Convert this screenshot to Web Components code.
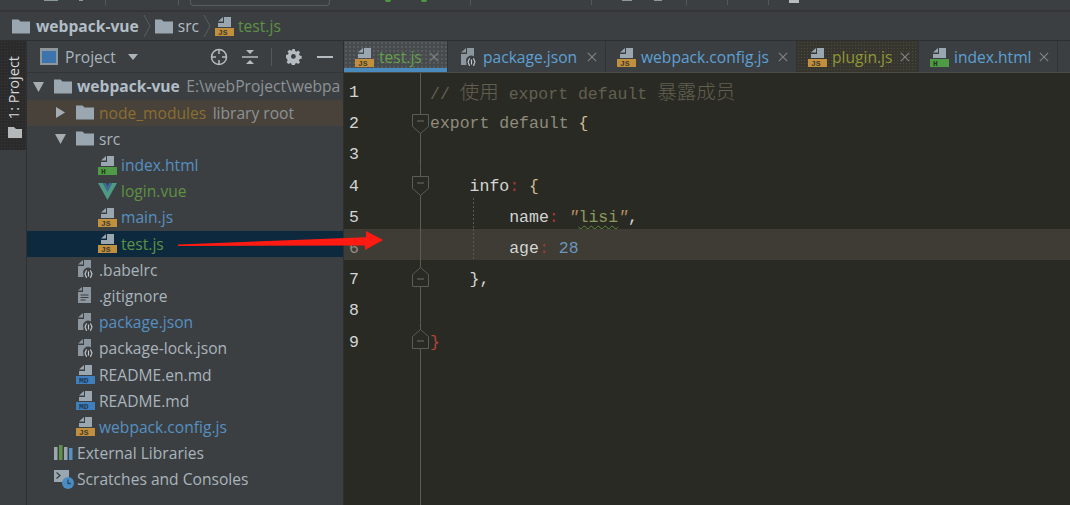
<!DOCTYPE html>
<html lang="en">
<head>
<meta charset="UTF-8">
<title>webpack-vue</title>
<style>
  html, body { margin: 0; height: 100%; background: #3c3f41; overflow: hidden; }
  body { font-family: "Open Sans", "Noto Sans", sans-serif; }
</style>
</head>
<body>

<ide-app>
  <ide-toolbar slot="toolbar"></ide-toolbar>

  <ide-breadcrumb slot="breadcrumb">
    <crumb-item icon="folder" bold>webpack-vue</crumb-item>
    <crumb-item icon="folder">src</crumb-item>
    <crumb-item icon="js" color="#5d9144" last>test.js</crumb-item>
  </ide-breadcrumb>

  <tool-strip slot="strip">1: Project</tool-strip>

  <project-panel slot="panel">
    <tree-row level="0" arrow="open" icon="folder" bold>webpack-vue<span slot="hint">E:\webProject\webpa</span></tree-row>
    <tree-row level="1" arrow="closed" icon="folder" color="#8a6f30" tint="#48423b">node_modules<span slot="hint">library root</span></tree-row>
    <tree-row level="1" arrow="open" icon="folder">src</tree-row>
    <tree-row level="2" icon="html" color="#5590c2">index.html</tree-row>
    <tree-row level="2" icon="vue" color="#5d9144">login.vue</tree-row>
    <tree-row level="2" icon="js" color="#5590c2">main.js</tree-row>
    <tree-row level="2" icon="js" color="#5d9144" tint="#0d293e">test.js</tree-row>
    <tree-row level="1" icon="json">.babelrc</tree-row>
    <tree-row level="1" icon="text">.gitignore</tree-row>
    <tree-row level="1" icon="json" color="#5590c2">package.json</tree-row>
    <tree-row level="1" icon="json">package-lock.json</tree-row>
    <tree-row level="1" icon="md">README.en.md</tree-row>
    <tree-row level="1" icon="md">README.md</tree-row>
    <tree-row level="1" icon="js" color="#5590c2">webpack.config.js</tree-row>
    <tree-row level="0" icon="libs">External Libraries</tree-row>
    <tree-row level="0" icon="scratch">Scratches and Consoles</tree-row>
  </project-panel>

  <editor-tabs slot="tabs">
    <editor-tab width="104" icon="js" color="#66a04a" state="active">test.js</editor-tab>
    <editor-tab width="158" icon="json" color="#5da0d6">package.json</editor-tab>
    <editor-tab width="191" icon="js" color="#5da0d6">webpack.config.js</editor-tab>
    <editor-tab width="122" icon="js" color="#8f9633" state="tinted">plugin.js</editor-tab>
    <editor-tab width="139" icon="html" color="#5da0d6">index.html</editor-tab>
  </editor-tabs>

  <code-editor slot="editor">
    <code-line n="1"><code-tok kind="cm">// <code-tok kind="cjk">使用</code-tok> export default <code-tok kind="cjk">暴露成员</code-tok></code-tok></code-line>
    <code-line n="2" fold="down"><code-tok kind="kw">export default </code-tok><code-tok kind="br">{</code-tok></code-line>
    <code-line n="3"></code-line>
    <code-line n="4" fold="down">    <code-tok kind="id">info</code-tok><code-tok kind="col">: </code-tok><code-tok kind="br">{</code-tok></code-line>
    <code-line n="5" guide>        <code-tok kind="id">name</code-tok><code-tok kind="col">: </code-tok><code-tok kind="qt">"</code-tok><code-tok kind="str">lisi</code-tok><code-tok kind="qt">"</code-tok><code-tok kind="id">,</code-tok></code-line>
    <code-line n="6" guide current>        <code-tok kind="id">age</code-tok><code-tok kind="col">: </code-tok><code-tok kind="num">28</code-tok></code-line>
    <code-line n="7" fold="up">    <code-tok kind="id">}</code-tok><code-tok kind="id">,</code-tok></code-line>
    <code-line n="8"></code-line>
    <code-line n="9" fold="up"><code-tok kind="end">}</code-tok></code-line>
    <code-line rest></code-line>
  </code-editor>

  <red-arrow slot="overlay"></red-arrow>
</ide-app>

<script>
  // all the little icons, keyed by name. page + badge is shared by the file types
  const PAGE = '<path d="M9 0h7v10H3V6h6z" fill="#9aa7b0"/><path d="M3 4.600 8 0v4.600z" fill="#9aa7b0"/>';
  const badge = (bg, label, fg) =>
    `<rect x="0" y="11" width="19" height="8" fill="${bg}"/>` +
    `<text x="3" y="18" font-family="Liberation Mono, monospace" font-size="8" font-weight="700" fill="${fg}">${label}</text>`;

  const ICONS = {
    folder: '<path d="M0 2.500h6.500l2 2H18v12H0z" fill="#9aa7b0"/>',
    js: PAGE + badge('#c28f3c', 'JS', '#3c3a2c'),
    html: PAGE + badge('#4f9a45', 'H', '#23381f'),
    md: PAGE + badge('#3f7fbd', 'MD', '#1f3a55'),
    vue: '<path d="M0 1h5l4.500 8L14 1h5L9.500 18z" fill="#4e9a83"/><path d="M5 1h3l1.500 3L11 1h3L9.500 10z" fill="#3d6a94"/>',
    json: '<path d="M8 0h7v8.500a5 5 0 0 0-7.500 6V17H2V6h6z" fill="#8b969e"/><path d="M2 4.600 7 0v4.600z" fill="#8b969e"/>' +
      '<circle cx="12.500" cy="14" r="5" fill="#3c3f41"/>' +
      '<path d="M11 10.500c-1.500 0-1 3.500-2.500 3.500 1.500 0 1 3.500 2.500 3.500M14 10.500c1.500 0 1 3.500 2.500 3.500-1.500 0-1 3.500-2.500 3.500M12.500 11.500v5" fill="none" stroke="#c0c8cd" stroke-width="1.200"/>',
    text: '<path d="M7 1h8v16H2V6h5z" fill="#8b969e"/><path d="M2 4.600 6 1v3.600z" fill="#8b969e"/><path d="M4.500 9h8M4.500 11.500h8M4.500 14h5" stroke="#3c3f41" stroke-width="1.200"/>',
    libs: '<rect x="0" y="3" width="3.500" height="13" fill="#9aa7b0"/><rect x="5" y="1" width="3.500" height="15" fill="#5d9144"/><rect x="10" y="3" width="3.500" height="13" fill="#9aa7b0"/><rect x="15" y="4" width="3.500" height="12" fill="#5590c2"/>',
    scratch: '<rect x="0" y="0" width="15" height="12" fill="#9aa7b0"/><path d="M2.500 2.500 6 5.500 2.500 8.500" fill="none" stroke="#3c3f41" stroke-width="1.300"/><circle cx="14" cy="13" r="6" fill="#4a8cc4"/><path d="M14 9.500V13.500H17" fill="none" stroke="#2b4a66" stroke-width="1.300"/>'
  };

  class FileIcon extends HTMLElement {
    connectedCallback() {
      const name = this.getAttribute('name');
      this.attachShadow({ mode: 'open' }).innerHTML = `
        <style>
          :host { display: inline-flex; width: 19px; height: 19px; flex: none; }
          svg { width: 19px; height: 19px; display: block; overflow: visible; }
        </style>
        <svg viewBox="0 0 19 19">${ICONS[name] || ''}</svg>`;
    }
  }

  class IdeApp extends HTMLElement {
    constructor() {
      super();
      this.attachShadow({ mode: 'open' }).innerHTML = `
        <style>
          :host { display: grid; position: relative; width: 1070px; height: 505px; overflow: hidden;
            grid-template-columns: 27px 317px 1fr; grid-template-rows: 12px 29px 32px 1fr; background: #3c3f41; }
          ::slotted([slot=toolbar]), ::slotted([slot=breadcrumb]) { grid-column: 1 / -1; }
          ::slotted([slot=strip]) { grid-column: 1; grid-row: 3 / 5; }
          ::slotted([slot=panel]) { grid-column: 2; grid-row: 3 / 5; }
          ::slotted([slot=tabs]) { grid-column: 3; grid-row: 3; }
          ::slotted([slot=editor]) { grid-column: 3; grid-row: 4; }
        </style>
        <slot name="toolbar"></slot>
        <slot name="breadcrumb"></slot>
        <slot name="strip"></slot>
        <slot name="panel"></slot>
        <slot name="tabs"></slot>
        <slot name="editor"></slot>
        <slot name="overlay"></slot>`;
    }
  }

  // only the bottom edge of the main toolbar is in the crop
  class IdeToolbar extends HTMLElement {
    constructor() {
      super();
      this.attachShadow({ mode: 'open' }).innerHTML = `
        <style>
          :host { display: flex; height: 12px; box-sizing: border-box; background: #3c3f41; border-bottom: 2px solid #333537; align-items: flex-start; }
          i { display: block; flex: none; }
          .sep { width: 1px; height: 5px; background: #55585a; }
          .search { width: 140px; height: 6px; box-sizing: border-box; border: 1px solid #5a5d5f; border-top: 0; border-radius: 0 0 4px 4px; }
          .dot { width: 6px; height: 2px; border-radius: 0 0 3px 3px; background: #4f9a45; }
          .nub { height: 1px; background: #8a9a9a; }
          .white { width: 10px; height: 3px; background: #b9bcbd; }
        </style>
        <i class="nub" style="width:14px;margin-left:44px"></i>
        <i class="nub" style="width:4px;margin-left:21px"></i>
        <i class="sep" style="margin-left:22px"></i>
        <i class="sep" style="margin-left:72px"></i>
        <i class="search" style="margin-left:11px"></i>
        <i class="dot" style="margin-left:55px"></i>
        <i class="dot" style="margin-left:30px"></i>
        <i class="sep" style="margin-left:43px"></i>
        <i class="sep" style="margin-left:120px"></i>
        <i class="nub" style="width:10px;margin-left:30px"></i>
        <i class="nub" style="width:8px;margin-left:22px"></i>
        <i class="sep" style="margin-left:24px"></i>
        <i class="sep" style="margin-left:40px"></i>
        <i class="sep" style="margin-left:40px"></i>
        <i class="white" style="margin-left:20px"></i>`;
    }
  }

  class IdeBreadcrumb extends HTMLElement {
    constructor() {
      super();
      this.attachShadow({ mode: 'open' }).innerHTML = `
        <style>
          :host { display: flex; align-items: center; box-sizing: border-box; height: 29px; padding-left: 12px; background: #3c3f41; border-bottom: 1px solid #2d2f30; }
        </style>
        <slot></slot>`;
    }
  }

  class CrumbItem extends HTMLElement {
    connectedCallback() {
      const bold = this.hasAttribute('bold');
      const last = this.hasAttribute('last');
      this.attachShadow({ mode: 'open' }).innerHTML = `
        <style>
          :host { display: inline-flex; align-items: center; font-size: 15.6px; color: ${this.getAttribute('color') || '#b1bdc7'}; }
          .t { margin-left: ${bold ? 5 : 4}px; font-weight: ${bold ? 700 : 400}; }
          svg { width: 8px; height: 24px; margin: 0 4px; }
        </style>
        <file-icon name="${this.getAttribute('icon')}"></file-icon>
        <span class="t"><slot></slot></span>
        ${last ? '' : '<svg viewBox="0 0 8 24"><path d="M1 1 7 12 1 23" fill="none" stroke="#5b5e60"/></svg>'}`;
    }
  }

  class ToolStrip extends HTMLElement {
    constructor() {
      super();
      this.attachShadow({ mode: 'open' }).innerHTML = `
        <style>
          :host { display: block; background: #3c3f41; border-right: 1px solid #2d2f30; box-sizing: border-box; }
          .btn { background: radial-gradient(#363636 30%, transparent 35%) 0 0/3px 3px, #2b2b2b; height: 109px; display: flex; flex-direction: column; align-items: center; padding: 15px 0 0 3px; box-sizing: border-box; }
          .label { writing-mode: vertical-rl; transform: rotate(180deg); font-size: 14.500px; color: #d6d8d9; line-height: 1; }
          svg { width: 14px; height: 12px; margin-top: 7px; }
        </style>
        <div class="btn">
          <span class="label"><slot></slot></span>
          <svg viewBox="0 0 14 12"><path d="M0 1h6l2 2h6v9H0z" fill="#b5b8b9"/></svg>
        </div>`;
    }
  }

  class ProjectPanel extends HTMLElement {
    constructor() {
      super();
      this.attachShadow({ mode: 'open' }).innerHTML = `
        <style>
          :host { display: flex; flex-direction: column; background: #3c3f41; border-right: 1px solid #2d2f30; box-sizing: border-box; overflow: hidden; min-width: 0; }
          .head { display: flex; align-items: center; height: 32.4px; flex: none; box-sizing: border-box; border-bottom: 1px solid #323436; padding-left: 13px; color: #a9b4bc; font-size: 15.6px; }
          .head svg { display: block; flex: none; }
          .name { margin-left: 7px; }
          .tools { display: flex; align-items: center; margin-left: auto; }
          .sep { width: 1px; height: 18px; background: #55585a; }
        </style>
        <div class="head">
          <svg width="18" height="17" viewBox="0 0 18 17"><rect width="18" height="17" fill="#8d979e"/><rect x="2" y="3" width="14" height="12" fill="#3d74ad"/></svg>
          <span class="name">Project</span>
          <svg style="margin-left:12px" width="10" height="6" viewBox="0 0 10 6"><path d="M0 0h10L5 6z" fill="#a9b4bc"/></svg>
          <div class="tools">
            <svg width="18" height="18" viewBox="0 0 18 18"><g fill="none" stroke="#b5bcc1" stroke-width="1.500"><circle cx="9" cy="9" r="7.500"/><path d="M9 1v5M9 12v5M1 9h5M12 9h5"/></g></svg>
            <svg style="margin-left:14px" width="16" height="14" viewBox="0 0 16 14"><path d="M0 7h16" stroke="#b5bcc1" stroke-width="1.500"/><path d="M4 0h8L8 4zM4 14h8l-4-4z" fill="#b5bcc1"/></svg>
            <i class="sep" style="margin-left:13px"></i>
            <svg style="margin-left:14px" width="16" height="16" viewBox="0 0 16 16"><path d="M6.500 0h3l.4 2.200 1.500.7 1.900-1.200 2 2.100-1.200 1.800.7 1.600 2.200.4v3l-2.200.4-.7 1.500 1.200 1.900-2.100 2-1.800-1.200-1.600.7-.4 2.200h-3l-.4-2.200-1.500-.7-1.900 1.200-2-2.100 1.200-1.800-.7-1.600L0 9.500v-3l2.200-.4.700-1.500L1.700 2.700l2.100-2 1.800 1.200 1.600-.7z" fill="#b5bcc1" transform="scale(.92)"/><circle cx="7.400" cy="7.400" r="2.400" fill="#3c3f41"/></svg>
            <svg style="margin-left:15px;margin-right:10px" width="16" height="2" viewBox="0 0 16 2"><rect width="16" height="2" fill="#b5bcc1"/></svg>
          </div>
        </div>
        <slot></slot>`;
    }
  }

  class TreeRow extends HTMLElement {
    connectedCallback() {
      const level = Number(this.getAttribute('level') || 0);
      const arrow = this.getAttribute('arrow');
      const bold = this.hasAttribute('bold');
      const tri = arrow === 'open' ? '<path d="M0 1h11L5.500 11z" fill="#a6adb2"/>'
        : arrow === 'closed' ? '<path d="M1 0 10 5.500 1 11z" fill="#a6adb2"/>' : '';
      this.attachShadow({ mode: 'open' }).innerHTML = `
        <style>
          :host { display: flex; align-items: center; height: 26.2px; flex: none; white-space: nowrap; overflow: hidden;
            box-sizing: border-box; padding-left: ${6 + level * 22}px; font-size: 15.6px;
            background: ${this.getAttribute('tint') || 'transparent'}; color: ${this.getAttribute('color') || '#a9b4bc'}; }
          svg { width: 21px; height: 11px; flex: none; display: block; }
          .t { margin-left: 4px; font-weight: ${bold ? 700 : 400}; color: ${bold ? '#b1bdc7' : 'inherit'}; }
          .hint { margin-left: 6.500px; color: #8d9396; font-weight: 400; }
        </style>
        <svg viewBox="0 0 21 11">${tri}</svg>
        <file-icon name="${this.getAttribute('icon')}"></file-icon>
        <span class="t"><slot></slot></span>
        <span class="hint"><slot name="hint"></slot></span>`;
    }
  }

  class EditorTabs extends HTMLElement {
    constructor() {
      super();
      this.attachShadow({ mode: 'open' }).innerHTML = `
        <style>
          :host { display: flex; height: 32px; box-sizing: border-box; background: #3c3f41; border-bottom: 1px solid #4c4c47; overflow: hidden; }
        </style>
        <slot></slot>`;
    }
  }

  class EditorTab extends HTMLElement {
    connectedCallback() {
      const state = this.getAttribute('state');
      const bg = state === 'active'
        ? 'radial-gradient(#565b5e 30%, transparent 35%) 0 0/4px 4px, #474b4e'
        : state === 'tinted'
        ? 'radial-gradient(#4a4a42 30%, transparent 35%) 0 0/3px 3px, #36362f'
        : '#3c3f41';
      this.attachShadow({ mode: 'open' }).innerHTML = `
        <style>
          :host { display: flex; align-items: center; position: relative; box-sizing: border-box; flex: none; height: 31px;
            width: ${this.getAttribute('width')}px; padding: 1px 8px 0 11px; font-size: 15.6px;
            background: ${bg}; color: ${this.getAttribute('color')}; border-right: 1px solid #313335; }
          :host([state=active])::after { content: ""; position: absolute; left: 0; right: 0; bottom: 0; height: 4px; background: #4a8bbd; }
          .t { margin-left: 5px; white-space: nowrap; }
          svg { width: 10px; height: 10px; margin-left: auto; flex: none; }
        </style>
        <file-icon name="${this.getAttribute('icon')}"></file-icon>
        <span class="t"><slot></slot></span>
        <svg viewBox="0 0 12 12"><path d="M1 1 11 11M11 1 1 11" stroke="#7e8487" stroke-width="1.300"/></svg>`;
    }
  }

  class CodeEditor extends HTMLElement {
    constructor() {
      super();
      this.attachShadow({ mode: 'open' }).innerHTML = `
        <style>
          :host { display: flex; flex-direction: column; background: #2a2a25; overflow: hidden; min-height: 0; }
        </style>
        <slot></slot>`;
    }
  }

  class CodeLine extends HTMLElement {
    connectedCallback() {
      const fold = this.getAttribute('fold');
      const rest = this.hasAttribute('rest');
      const shape = fold === 'down' ? 'M.5.5h16v12l-8 7-8-7z' : 'M.5 19.500h16v-12l-8-7-8 7z';
      const dash = fold === 'down' ? 'M5 7h7' : 'M5 12h7';
      const mark = fold
        ? `<svg width="17" height="20" viewBox="0 0 17 20"><path d="${shape}" fill="#2a2a25" stroke="#5c5c55"/><path d="${dash}" stroke="#6c6c64"/></svg>`
        : '';
      this.attachShadow({ mode: 'open' }).innerHTML = `
        <style>
          :host { display: grid; grid-template-columns: 67px 19px 1fr; height: 31.2px; flex: none;
            font-family: "Liberation Mono", monospace; font-size: 16.5px; background: transparent; }
          :host([current]) { background: #3f3c35; }
          :host([rest]) { flex: 1; height: auto; }
          .num { padding: 8px 0 0 5px; line-height: 23px; color: #d3d6d4; }
          :host([current]) .num { color: #8b8b84; }
          .fold { display: flex; align-items: center; justify-content: center; padding-top: ${fold === 'up' ? 2 : 8}px; box-sizing: border-box;
            background: linear-gradient(#5c5c55, #5c5c55) center/1px 100% no-repeat; }
          .code { padding-top: 8px; line-height: 23px; min-width: 0; white-space: pre; }
          :host([guide]) .code { background: linear-gradient(#5a5a52 50%, transparent 0) 43px 0/1px 4px repeat-y; }
        </style>
        <span class="num">${rest ? '' : this.getAttribute('n')}</span>
        <span class="fold">${mark}</span>
        <span class="code"><slot></slot></span>`;
    }
  }

  // no whitespace before the slot: the token inherits white-space: pre from the line
  class CodeTok extends HTMLElement {
    constructor() {
      super();
      this.attachShadow({ mode: 'open' }).innerHTML = `<style>
          :host { color: #d3d6d4; }
          :host([kind=cm]) { color: #62604f; }
          :host([kind=cjk]) { color: #62604f; font-family: "Noto Sans CJK SC", sans-serif; font-size: 19.5px; font-weight: 300; line-height: 1; }
          :host([kind=kw]) { color: #8f8c7c; }
          :host([kind=br]) { color: #cdbd8e; }
          :host([kind=col]) { color: #a3382f; }
          :host([kind=qt]) { color: #b98d5e; font-style: italic; }
          :host([kind=str]) { color: #8c9a5c; text-decoration: underline wavy #5f8a3a 1px; text-underline-offset: 3px; }
          :host([kind=num]) { color: #6897bb; }
          :host([kind=end]) { color: #b3453a; }
        </style><slot></slot>`;
    }
  }

  // the arrow somebody drew on the screenshot, it sits over the panel and the editor
  class RedArrow extends HTMLElement {
    constructor() {
      super();
      this.attachShadow({ mode: 'open' }).innerHTML = `
        <style>
          :host { position: absolute; left: 170px; top: 225px; width: 220px; height: 30px; pointer-events: none; }
          svg { display: block; }
        </style>
        <svg width="220" height="30" viewBox="0 0 220 30">
          <path d="M8 19.500 196 12.300V6L213 15 195 25V20.500L8 21z" fill="#ff1a12"/>
        </svg>`;
    }
  }

  customElements.define('file-icon', FileIcon);
  customElements.define('ide-app', IdeApp);
  customElements.define('ide-toolbar', IdeToolbar);
  customElements.define('ide-breadcrumb', IdeBreadcrumb);
  customElements.define('crumb-item', CrumbItem);
  customElements.define('tool-strip', ToolStrip);
  customElements.define('project-panel', ProjectPanel);
  customElements.define('tree-row', TreeRow);
  customElements.define('editor-tabs', EditorTabs);
  customElements.define('editor-tab', EditorTab);
  customElements.define('code-editor', CodeEditor);
  customElements.define('code-line', CodeLine);
  customElements.define('code-tok', CodeTok);
  customElements.define('red-arrow', RedArrow);
</script>
</body>
</html>
